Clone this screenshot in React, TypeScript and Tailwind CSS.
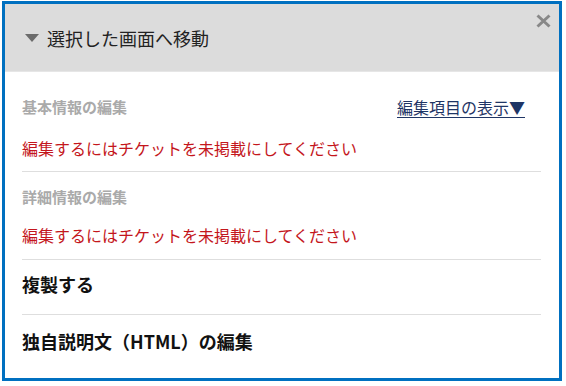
export default function App() {
  const font = { fontFamily: '"Noto Sans CJK JP", "Noto Sans", sans-serif' }
  return (
    <div className="w-[566px] h-[386px] bg-white pl-[2px] pt-[1px]" style={font}>
      <div className="w-[560px] h-[380px] border-[3px] border-[#0070c0] bg-white flex flex-col">
        {/* ヘッダー */}
        <div className="relative h-[68px] bg-[#dcdcdc] border-b border-[#e6e6e6] flex items-center pl-[20px]">
          <svg width="14" height="8" viewBox="0 0 14 8" className="mr-[8px] mt-[1px]">
            <polygon points="0,0 14,0 7,8" fill="#6b6b6b" />
          </svg>
          <span className="text-[18px] leading-[24px] text-[#222]">選択した画面へ移動</span>
          <svg width="15" height="14" viewBox="0 0 15 14" className="absolute right-[8px] top-[10px]">
            <path d="M1.5 1.5 L13.5 12.5 M13.5 1.5 L1.5 12.5" stroke="#888" strokeWidth="3" />
          </svg>
        </div>

        <div className="pl-[17px] pr-[18px]">
          {/* 基本情報 */}
          <div className="pt-[23px] pb-[11px] border-b border-[#dedede]">
            <div className="flex items-center justify-between h-[24px]">
              <span className="text-[15px] font-bold text-[#aaaaaa]">基本情報の編集</span>
              <span className="text-[16px] text-[#1f3565] underline underline-offset-[3px] mr-[16px]">
                編集項目の表示▼
              </span>
            </div>
            <div className="mt-[17px] text-[16px] leading-[24px] text-[#c4161c]">
              編集するにはチケットを未掲載にしてください
            </div>
          </div>

          {/* 詳細情報 */}
          <div className="pt-[13px] pb-[12px] border-b border-[#dedede]">
            <div className="h-[24px] flex items-center">
              <span className="text-[15px] font-bold text-[#aaaaaa]">詳細情報の編集</span>
            </div>
            <div className="mt-[14px] text-[16px] leading-[24px] text-[#c4161c]">
              編集するにはチケットを未掲載にしてください
            </div>
          </div>

          <div className="pt-[12px] pb-[18px] border-b border-[#dedede] text-[18px] leading-[24px] font-bold text-[#111]">
            複製する
          </div>
          <div className="pt-[14px] text-[18px] leading-[24px] font-bold text-[#111]">
            独自説明文（HTML）の編集
          </div>
        </div>
      </div>
    </div>
  )
}
